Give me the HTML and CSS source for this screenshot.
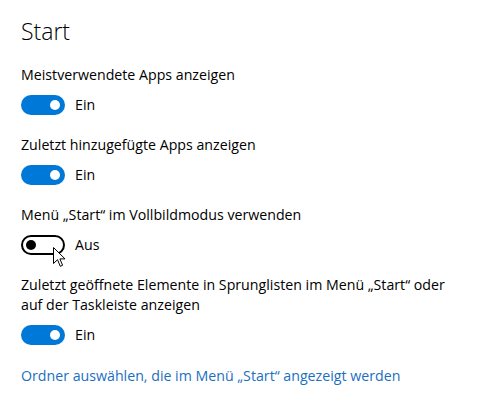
FILE: index.html
```html
<!DOCTYPE html>
<html lang="de">
<head>
<meta charset="utf-8">
<link rel="stylesheet" href="styles.css">
</head>
<body>
<main class="page">
  <h1 class="title">Start</h1>

  <section class="setting">
    <div class="label">Meistverwendete Apps anzeigen</div>
    <div class="toggle-row">
      <span class="toggle on"><span class="knob"></span></span>
      <span class="state">Ein</span>
    </div>
  </section>

  <section class="setting">
    <div class="label">Zuletzt hinzugefügte Apps anzeigen</div>
    <div class="toggle-row">
      <span class="toggle on"><span class="knob"></span></span>
      <span class="state">Ein</span>
    </div>
  </section>

  <section class="setting">
    <div class="label">Menü „Start“ im Vollbildmodus verwenden</div>
    <div class="toggle-row">
      <span class="toggle off"><span class="knob"></span>
        <svg class="cursor" width="13" height="21" viewBox="0 0 13 21"><path d="M0.5 0.5 L0.5 16.5 L4.5 12.7 L7.3 19.3 L9.6 18.3 L6.9 11.9 L12 11.9 Z" fill="#fff" stroke="#000" stroke-width="1" stroke-linejoin="miter"/></svg>
      </span>
      <span class="state">Aus</span>
    </div>
  </section>

  <section class="setting">
    <div class="label">Zuletzt geöffnete Elemente in Sprunglisten im Menü „Start“ oder auf der Taskleiste anzeigen</div>
    <div class="toggle-row">
      <span class="toggle on"><span class="knob"></span></span>
      <span class="state">Ein</span>
    </div>
  </section>

  <a class="link" href="#">Ordner auswählen, die im Menü „Start“ angezeigt werden</a>
</main>
</body>
</html>
```
FILE: styles.css
```css
html, body {
  margin: 0;
  padding: 0;
  background: #ffffff;
}
body {
  font-family: "Open Sans", "Noto Sans", "Liberation Sans", sans-serif;
  color: #000;
}
.page {
  padding: 14px 21px 0 21px;
  display: flex;
  flex-direction: column;
}
.title {
  margin: 0 0 17px 0;
  font-size: 23px;
  font-weight: 300;
  line-height: 34px;
}
.setting {
  display: flex;
  flex-direction: column;
  gap: 10px;
  margin-bottom: 20px;
}
.label {
  font-size: 14.2px;
  line-height: 20px;
  max-width: 432px;
}
.toggle-row {
  display: flex;
  align-items: center;
  gap: 10px;
  height: 20px;
}
.toggle {
  position: relative;
  box-sizing: border-box;
  width: 44px;
  height: 20px;
  border-radius: 10px;
  display: flex;
  align-items: center;
  flex: none;
}
.toggle.on {
  background: #0078d7;
  justify-content: flex-end;
  padding-right: 5px;
}
.toggle.off {
  border: 2px solid #000;
  background: #fff;
  padding-left: 3px;
}
.knob {
  width: 10px;
  height: 10px;
  border-radius: 50%;
}
.toggle.on .knob { background: #fff; }
.toggle.off .knob { background: #000; }
.state {
  font-size: 14.2px;
  line-height: 20px;
}
.cursor {
  position: absolute;
  left: 30px;
  top: 10px;
}
.link {
  font-size: 14.2px;
  line-height: 20px;
  color: #1a6fbf;
  text-decoration: none;
  margin-top: 1px;
}
```
